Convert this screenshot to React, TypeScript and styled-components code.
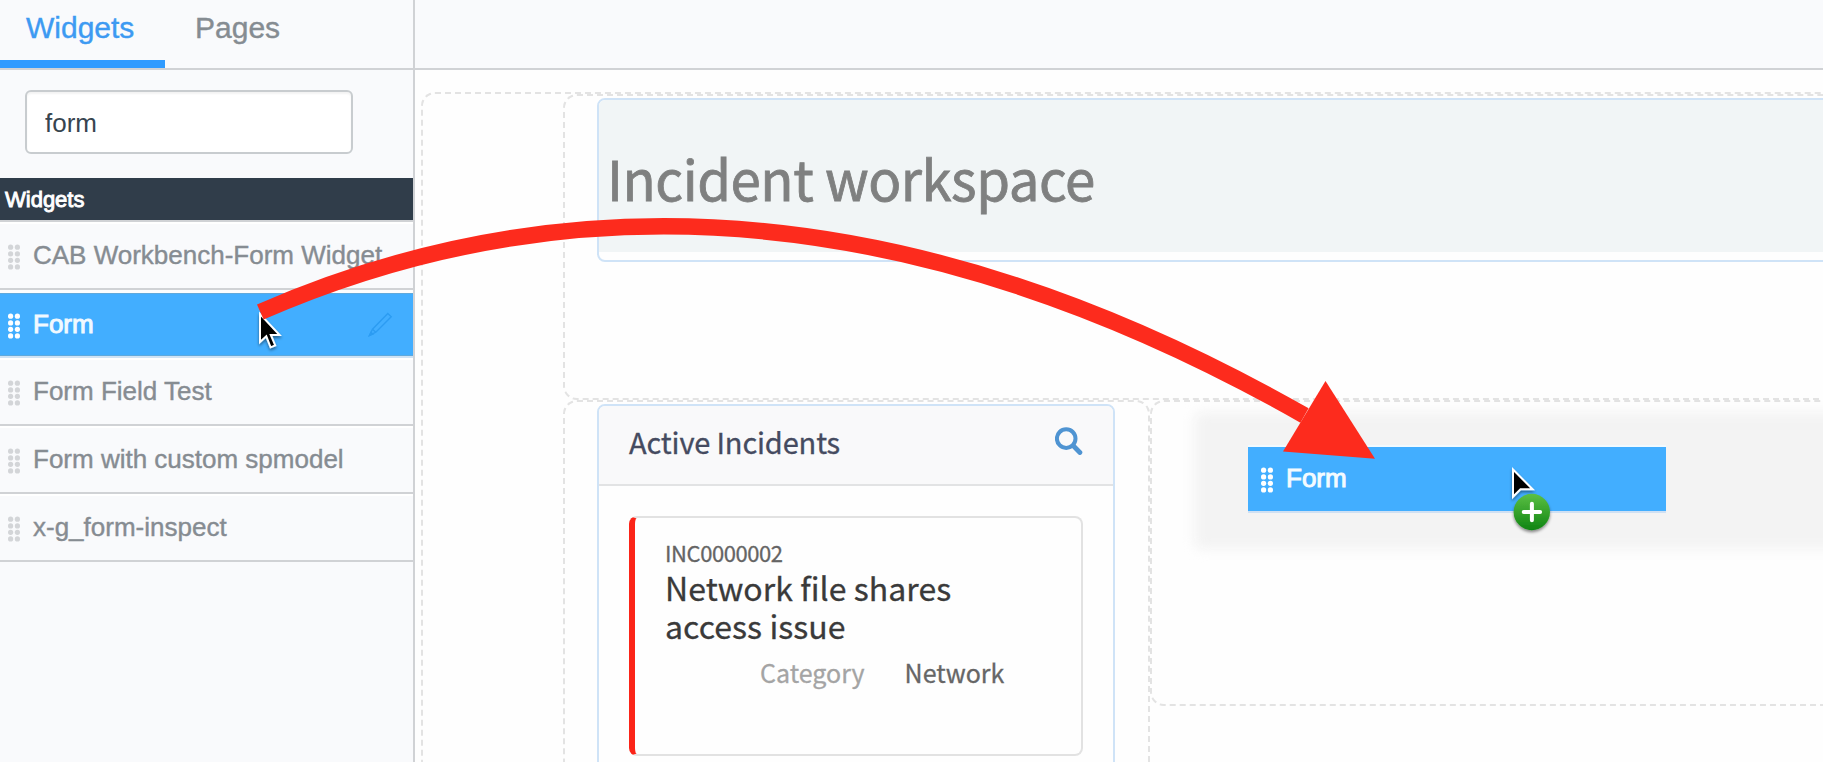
import React from "react";
import styled, { createGlobalStyle, css } from "styled-components";

const GlobalStyle = createGlobalStyle`
  * { box-sizing: border-box; }
  body { margin: 0; background: #fefefe; overflow: hidden; }
`;

const ui = `"Liberation Sans", Arial, sans-serif`;
const content = `"Noto Sans CJK SC", "Noto Sans", sans-serif`;

const Page = styled.div`
  position: relative;
  display: flex;
  width: 1823px;
  height: 762px;
  overflow: hidden;
  background: #fefefe;
  font-family: ${ui};
`;

const Sidebar = styled.aside`
  flex: none;
  width: 415px;
  border-right: 2px solid #d0d2d5;
  background: #f9fafc;
`;

const Tabs = styled.nav`
  display: flex;
  height: 70px;
  border-bottom: 2px solid #d0d2d5;
`;

const Tab = styled.div<{ $active?: boolean; $width: number }>`
  width: ${(p) => p.$width}px;
  padding: 10px 0 0 ${(p) => (p.$active ? 26 : 30)}px;
  font-size: 30px;
  line-height: 36px;
  color: ${(p) => (p.$active ? "#3d9af2" : "#858c92")};
  -webkit-text-stroke: 0.4px currentColor;
  border-bottom: 8px solid ${(p) => (p.$active ? "#2f9bff" : "transparent")};
`;

const SearchInput = styled.input`
  display: block;
  width: 328px;
  height: 64px;
  margin: 20px 0 24px 25px;
  padding: 2px 18px 0;
  border: 2px solid #c8cccf;
  border-radius: 6px;
  background: #fff;
  box-shadow: inset 0 2px 2px rgba(0, 0, 0, 0.05);
  font: 26px ${ui};
  color: #37444f;
  outline: none;
`;

const ListHeading = styled.div`
  height: 44px;
  padding-left: 5px;
  border-bottom: 2px solid #d0d2d5;
  background: #303d4a;
  font-size: 22px;
  line-height: 44px;
  color: #fff;
  -webkit-text-stroke: 0.9px #fff;
`;

const Row = styled.div<{ $selected?: boolean }>`
  display: flex;
  align-items: center;
  height: 68px;
  padding: 0 20px 0 8px;
  font-size: 26px;
  white-space: nowrap;
  color: #868c92;
  -webkit-text-stroke: 0.4px currentColor;
  border-top: 2px solid #fff;
  border-bottom: 2px solid #d0d2d5;
  ${(p) =>
    p.$selected &&
    css`
      border-top: 3px solid #fbfdfe;
      border-bottom-color: #cfe3f5;
      background: #42aeff;
      background-clip: padding-box;
      box-shadow: inset 0 1px 0 #5fa9dc, inset 0 -1px 0 #5fa9dc;
      color: #f1f9ff;
      -webkit-text-stroke: 1px #f1f9ff;
    `}
`;

const RowLabel = styled.span`
  flex: 1;
  margin-left: 12px;
  line-height: 30px;
  padding-bottom: 2px;
`;

const GripSvg = styled.svg`
  flex: none;
  margin-top: 2px;
`;

const Canvas = styled.main`
  flex: 1;
  min-width: 0;
  overflow: hidden;
`;

const TopBar = styled.div`
  height: 70px;
  border-bottom: 2px solid #d0d2d5;
  background: #f9fafc;
`;

const dashed = css`
  border: 2px dashed #e3e3e3;
  border-radius: 14px;
`;

const Container = styled.div`
  ${dashed}
  width: 1600px;
  height: 900px;
  margin: 22px 0 0 6px;
  padding-left: 140px;
`;

const Section = styled.section`
  ${dashed}
  width: 1500px;
  height: 306px;
  padding: 2px 0 0 32px;
`;

const Columns = styled.div`
  display: flex;
  align-items: flex-start;
  width: 1500px;
`;

const Column = styled.div<{ $w: number; $h: number; $pad: string }>`
  ${dashed}
  flex: none;
  width: ${(p) => p.$w}px;
  height: ${(p) => p.$h}px;
  padding: ${(p) => p.$pad};
`;

const Widget = styled.div`
  border: 2px solid #cfe3f7;
  border-radius: 8px;
  overflow: hidden;
`;

const TitleWidget = styled(Widget)`
  height: 164px;
`;

const Title = styled.h1`
  margin: 0;
  height: 152px;
  padding: 48px 0 0 8px;
  background: #f1f5f6;
  font: 400 54.6px/60px ${content};
  letter-spacing: -0.48px;
  color: #7f8080;
  -webkit-text-stroke: 0.8px #7f8080;
`;

const ListWidget = styled(Widget)`
  width: 518px;
  height: 500px;
`;

const WidgetHeader = styled.header`
  display: flex;
  align-items: center;
  justify-content: space-between;
  height: 80px;
  padding: 0 30px 8px;
  border-bottom: 2px solid #e2e3e4;
  background: #f9f9fa;
  font: 400 29px/70px ${content};
  letter-spacing: -0.15px;
  color: #454b60;
  -webkit-text-stroke: 0.3px #454b60;
`;

const Card = styled.article`
  width: 454px;
  height: 240px;
  margin: 30px;
  padding: 19px 30px 0 30px;
  border: 2px solid #e2e2e2;
  border-left: 6px solid #fb2418;
  border-radius: 8px;
  font-family: ${content};
  -webkit-text-stroke: 0.3px currentColor;
`;

const Number = styled.div`
  font-size: 22px;
  line-height: 30px;
  letter-spacing: -0.42px;
  color: #646464;
`;

const Summary = styled.div`
  margin-top: 1px;
  width: 330px;
  font-size: 32px;
  line-height: 38px;
  letter-spacing: 0.06px;
  color: #3a3a3a;
`;

const Field = styled.div`
  display: flex;
  gap: 40px;
  margin: 9px 0 0 95px;
  font-size: 25px;
  line-height: 38px;
  color: #666;
`;

const FieldName = styled.span`
  color: #a4a4a4;
`;

const DropZone = styled.div`
  height: 137px;
  border-radius: 8px;
  background: #f3f3f3;
  filter: blur(6px);
`;

const Overlay = styled.svg`
  position: absolute;
  inset: 0;
  pointer-events: none;
`;

const DragGhost = styled.div`
  position: absolute;
  left: 1248px;
  top: 445px;
  display: flex;
  align-items: center;
  width: 418px;
  height: 68px;
  padding: 0 13px;
  border-top: 2px solid #f1faff;
  border-bottom: 2px solid #cfe0f3;
  background: #42aeff;
  background-clip: padding-box;
  font-size: 26px;
  color: #f4fbff;
  -webkit-text-stroke: 1px #f4fbff;
`;

const Grip = ({ color = "#d3d5d8" }: { color?: string }) => (
  <GripSvg width="13" height="26" fill={color} strokeWidth="0">
    {[3.2, 9.9, 16.3, 22.9].map((y) => (
      <React.Fragment key={y}>
        <circle cx="2.6" cy={y} r="2.6" />
        <circle cx="9.4" cy={y} r="2.6" />
      </React.Fragment>
    ))}
  </GripSvg>
);

const Pencil = () => (
  <svg width="26" height="26" viewBox="0 0 26 26" fill="none" stroke="#2c9cf2" strokeWidth="1.4">
    <path d="M2.5 23.5 L5.5 17.2 L20.8 1.6 L24.2 4.8 L8.8 20.2 Z M5.5 17.2 L8.8 20.2" />
    <path d="M2.5 23.5 L4 20.3 L6 22 Z" fill="#2c9cf2" />
  </svg>
);

const SearchIcon = () => (
  <svg width="28" height="28" viewBox="0 0 28 28" fill="none" stroke="#4f94d2">
    <circle cx="11.2" cy="11.6" r="9.3" strokeWidth="4" />
    <path d="M18.3 18.8 L24.9 25.5" strokeWidth="4.8" strokeLinecap="round" />
  </svg>
);

const rows = [
  "CAB Workbench-Form Widget",
  "Form",
  "Form Field Test",
  "Form with custom spmodel",
  "x-g_form-inspect",
];

export default function App() {
  return (
    <Page>
      <GlobalStyle />
      <Sidebar>
        <Tabs>
          <Tab $active $width={165}>Widgets</Tab>
          <Tab $width={160}>Pages</Tab>
        </Tabs>
        <SearchInput defaultValue="form" />
        <ListHeading>Widgets</ListHeading>
        {rows.map((name) => {
          const selected = name === "Form";
          return (
            <Row key={name} $selected={selected}>
              <Grip color={selected ? "#fff" : undefined} />
              <RowLabel>{name}</RowLabel>
              {selected && <Pencil />}
            </Row>
          );
        })}
      </Sidebar>

      <Canvas>
        <TopBar />
        <Container>
          <Section>
            <TitleWidget>
              <Title>Incident workspace</Title>
            </TitleWidget>
          </Section>
          <Columns>
            <Column $w={587} $h={500} $pad="2px 0 0 32px">
              <ListWidget>
                <WidgetHeader>
                  Active Incidents
                  <SearchIcon />
                </WidgetHeader>
                <Card>
                  <Number>INC0000002</Number>
                  <Summary>Network file shares access issue</Summary>
                  <Field>
                    <FieldName>Category</FieldName>
                    <span>Network</span>
                  </Field>
                </Card>
              </ListWidget>
            </Column>
            <Column $w={900} $h={306} $pad="10px 0 0 42px">
              <DropZone />
            </Column>
          </Columns>
        </Container>
      </Canvas>

      <DragGhost>
        <Grip color="#fff" />
        <RowLabel>Form</RowLabel>
      </DragGhost>

      <Overlay width="1823" height="762">
        <defs>
          <linearGradient id="badge" x1="0" y1="0" x2="0" y2="1">
            <stop offset="0" stopColor="#5cc044" />
            <stop offset="1" stopColor="#0f8412" />
          </linearGradient>
          <filter id="soft" x="-50%" y="-50%" width="200%" height="200%">
            <feDropShadow dx="0" dy="2" stdDeviation="1.6" floodOpacity="0.45" />
          </filter>
        </defs>
        <path
          d="M260 314 V342 L266.3 336.3 L270.6 347.3 L275.2 345.4 L270.8 335 H279.6 Z"
          fill="#000"
          stroke="#fff"
          strokeWidth="2"
          filter="url(#soft)"
        />
        <path
          d="M1513 469.5 V496.8 L1520.5 489.2 H1532.6 Z"
          fill="#000"
          stroke="#fff"
          strokeWidth="2"
          filter="url(#soft)"
        />
        <circle cx="1531.8" cy="512" r="18.2" fill="url(#badge)" filter="url(#soft)" />
        <path d="M1523.7 512 H1540.1 M1531.9 503.8 V520.2" stroke="#fff" strokeWidth="4" strokeLinecap="round" />
        <path d="M260.3 312 Q748 99 1304.5 415.5" fill="none" stroke="#fd2b1d" strokeWidth="16.5" />
        <path d="M1325.5 381 L1375 458.7 L1283 451.5 Z" fill="#fd2b1d" />
      </Overlay>
    </Page>
  );
}
